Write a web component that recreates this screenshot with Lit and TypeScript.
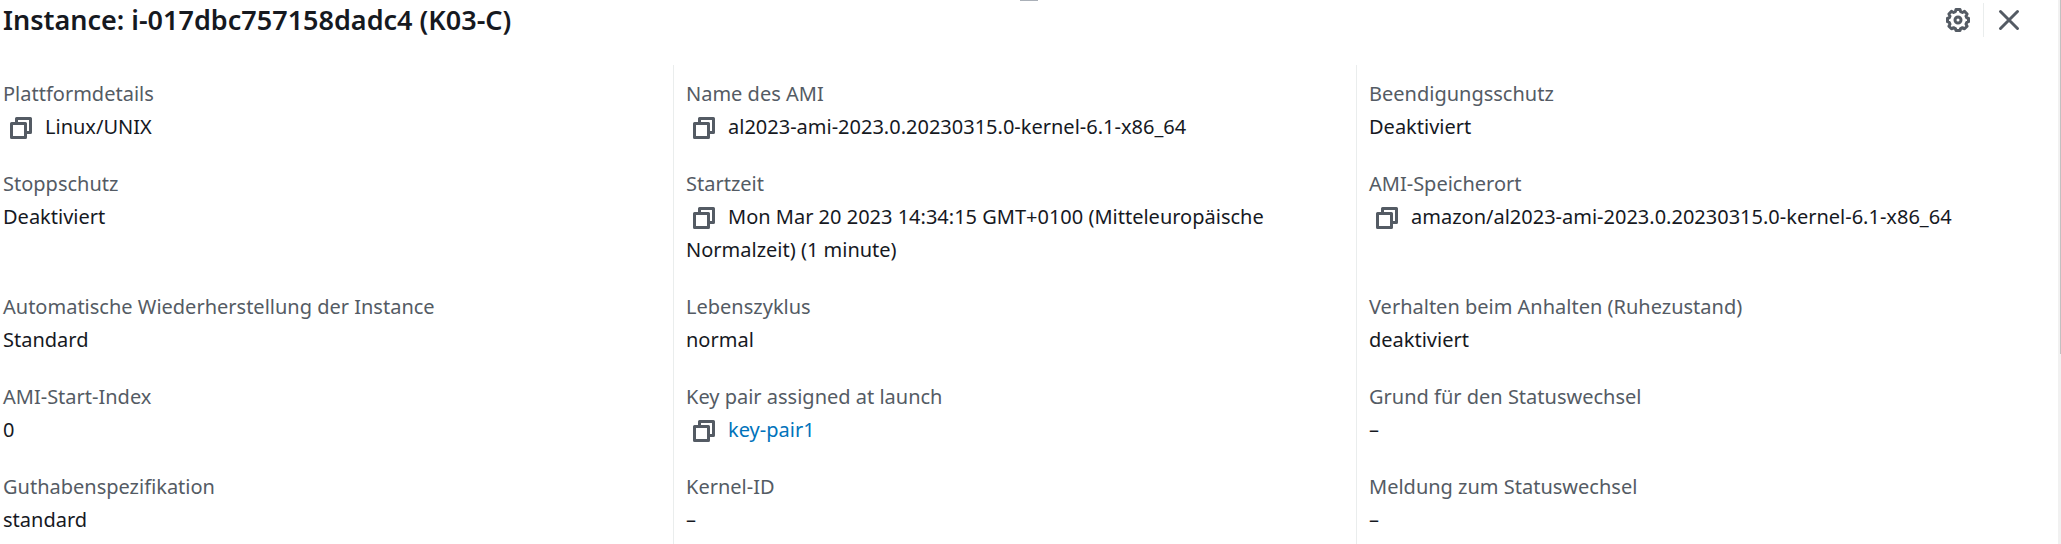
import { LitElement, html, css, nothing } from "lit";
import { customElement, property } from "lit/decorators.js";

interface Detail {
  label: string;
  value: string;
  copy?: boolean;
  href?: string;
}

const DETAILS: Detail[] = [
  { label: "Plattformdetails", value: "Linux/UNIX", copy: true },
  { label: "Name des AMI", value: "al2023-ami-2023.0.20230315.0-kernel-6.1-x86_64", copy: true },
  { label: "Beendigungsschutz", value: "Deaktiviert" },
  { label: "Stoppschutz", value: "Deaktiviert" },
  {
    label: "Startzeit",
    value: "Mon Mar 20 2023 14:34:15 GMT+0100 (Mitteleuropäische Normalzeit) (1 minute)",
    copy: true,
  },
  { label: "AMI-Speicherort", value: "amazon/al2023-ami-2023.0.20230315.0-kernel-6.1-x86_64", copy: true },
  { label: "Automatische Wiederherstellung der Instance", value: "Standard" },
  { label: "Lebenszyklus", value: "normal" },
  { label: "Verhalten beim Anhalten (Ruhezustand)", value: "deaktiviert" },
  { label: "AMI-Start-Index", value: "0" },
  { label: "Key pair assigned at launch", value: "key-pair1", copy: true, href: "#key-pair1" },
  { label: "Grund für den Statuswechsel", value: "–" },
  { label: "Guthabenspezifikation", value: "standard" },
  { label: "Kernel-ID", value: "–" },
  { label: "Meldung zum Statuswechsel", value: "–" },
];

@customElement("copy-button")
export class CopyButton extends LitElement {
  @property() text = "";

  static styles = css`
    :host {
      display: inline-block;
      vertical-align: middle;
    }
    .button {
      display: block;
      margin: 0;
      padding: 0;
      border: 0;
      background: none;
      cursor: pointer;
    }
    .icon {
      display: block;
      width: 22px;
      height: 22px;
      fill: none;
      stroke: #545b64;
      stroke-width: 3;
      stroke-linejoin: round;
    }
  `;

  private copy() {
    navigator.clipboard?.writeText(this.text);
  }

  render() {
    return html`<button class="button" type="button" aria-label="Kopieren" @click=${this.copy}>
      <svg class="icon" viewBox="0 0 22 22" aria-hidden="true">
        <path d="M1.5 6.5h14v14h-14z" />
        <path d="M6.5 6.5v-5h14v14h-5" />
      </svg>
    </button>`;
  }
}

@customElement("app-root")
export class AppRoot extends LitElement {
  static styles = css`
    :host {
      display: flex;
      min-height: 100vh;
      background: #fff;
      color: #16191f;
      font-family: "Noto Sans", sans-serif;
      font-size: 20px;
      line-height: 33px;
    }
    .panel {
      flex: 1;
      min-width: 0;
      overflow: hidden;
    }
    .handle {
      width: 18px;
      height: 1px;
      margin: 0 auto;
      background: #aab0b8;
    }
    .header {
      display: flex;
      align-items: center;
      justify-content: space-between;
      padding: 1px 37px 0 3px;
    }
    .title {
      margin: 0;
      font-size: 27px;
      font-weight: 600;
      line-height: 36px;
    }
    .actions {
      display: flex;
      align-items: center;
    }
    .action {
      display: block;
      margin: 0;
      padding: 0 13px;
      border: 0;
      background: none;
      cursor: pointer;
    }
    .action + .action {
      padding: 5px 0 5px 13px;
      border-left: 1px solid #eaeded;
    }
    .icon {
      display: block;
      width: 24px;
      height: 24px;
      fill: none;
      stroke: #545b64;
      stroke-width: 3;
      stroke-linecap: round;
      stroke-linejoin: round;
    }
    .details {
      display: grid;
      grid-template-columns: repeat(3, minmax(0, 1fr));
      margin: 27px 19px 0 -10px;
    }
    .detail {
      padding: 12px;
      border-left: 1px solid #eaeded;
    }
    .label {
      color: #545b64;
    }
    .value {
      margin: 0;
    }
    .copy {
      margin: 0 13px 2px 7px;
    }
    .link {
      color: #0073bb;
      text-decoration: none;
    }
    .scrollbar {
      display: flex;
      justify-content: flex-end;
      width: 3px;
      background: #f1f1f1;
    }
    .thumb {
      width: 1px;
      height: 354px;
      background: #c1c1c1;
    }
  `;

  private detail(d: Detail) {
    return html`<div class="detail">
      <dt class="label">${d.label}</dt>
      <dd class="value">${d.copy ? html`<copy-button class="copy" .text=${d.value}></copy-button>` : nothing}${d.href
          ? html`<a class="link" href=${d.href}>${d.value}</a>`
          : d.value}</dd>
    </div>`;
  }

  render() {
    return html`
      <main class="panel">
        <div class="handle"></div>
        <header class="header">
          <h1 class="title">Instance: i-017dbc757158dadc4 (K03-C)</h1>
          <div class="actions">
            <button class="action" type="button" aria-label="Einstellungen">
              <svg class="icon" viewBox="0 0 24 24" aria-hidden="true">
                <path
                  d="M10 1.5h4l.6 2.2 1.8.8 2.1-1.1 2.6 2.6-1.1 2.1.8 1.8 1.7.4v3.4l-1.7.6-.8 1.8 1.1 2.1-2.6 2.6-2.1-1.1-1.8.8-.6 2h-4l-.6-2-1.8-.8-2.1 1.1-2.6-2.6 1.1-2.1-.8-1.8-1.7-.6v-3.4l1.7-.4.8-1.8-1.1-2.1 2.6-2.6 2.1 1.1 1.8-.8z"
                />
                <circle cx="12" cy="12" r="3" />
              </svg>
            </button>
            <button class="action" type="button" aria-label="Schließen">
              <svg class="icon" viewBox="0 0 24 24" aria-hidden="true">
                <path d="M3.5 3.5l17 17M20.5 3.5l-17 17" />
              </svg>
            </button>
          </div>
        </header>
        <dl class="details">${DETAILS.map((d) => this.detail(d))}</dl>
      </main>
      <div class="scrollbar"><div class="thumb"></div></div>
    `;
  }
}
